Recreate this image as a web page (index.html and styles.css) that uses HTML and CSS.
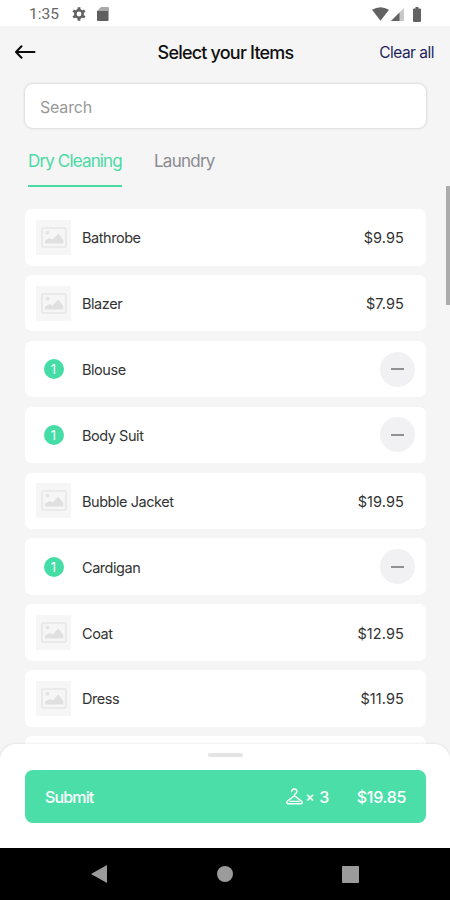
FILE: index.html
```html
<!DOCTYPE html>
<html lang="en">

<head>
    <meta charset="UTF-8" />
    <meta name="viewport" content="width=device-width, initial-scale=1.0" />
    <title>Select your Items</title>
    <link rel="stylesheet" href="styles.css">
</head>

<body>
    <!-- Shared icons -->
    <svg width="0" height="0" class="sprite">
        <symbol id="picture" viewBox="0 0 26 21">
            <rect x="1" y="1" width="24" height="19" rx="1.5" fill="none" stroke="#e6e6e7" stroke-width="1.6" />
            <circle cx="6.5" cy="5.8" r="2" fill="#e4e4e5" />
            <path d="M4 16.5v-2.8l4.5-2.7 3.2 1.6L17.3 6.5l5 6.5v3.5z" fill="#e0e0e1" />
        </symbol>
    </svg>

    <div class="app">
        <div class="status-bar">
            <span class="time">1:35</span>
            <svg class="gear" width="14" height="14" viewBox="0 0 14 14">
                <circle cx="7" cy="7" r="3.7" fill="none" stroke="#626262" stroke-width="2.5" />
                <path d="M7 .3v3M7 10.7v3M1.2 3.65l2.6 1.5M10.2 8.85l2.6 1.5M1.2 10.35l2.6-1.5M10.2 5.15l2.6-1.5" stroke="#626262" stroke-width="2.8" />
            </svg>
            <svg class="sd-card" width="12" height="14" viewBox="0 0 12 14">
                <path d="M4 0h6.8Q12 0 12 1.2v11.6Q12 14 10.8 14H1.2Q0 14 0 12.8V4z" fill="#a8a8a8" />
                <path d="M0 4h11v10H1.2Q0 14 0 12.8z" fill="#5f5f5f" />
            </svg>
            <svg class="wifi" width="17" height="14" viewBox="0 0 17 14">
                <path d="M0 2.8Q8.5-2.4 17 2.8L8.5 13.8z" fill="#626262" />
            </svg>
            <svg class="signal" width="13" height="13" viewBox="0 0 13 13">
                <path d="M13 0v13H0z" fill="#c9c9c9" />
                <path d="M8.5 4.5V13H0z" fill="#626262" />
            </svg>
            <svg class="battery" width="8" height="15" viewBox="0 0 8 15">
                <path d="M2.5 0h3v1.5H7q1 0 1 1V14q0 1-1 1H1q-1 0-1-1V2.5q0-1 1-1h1.5z" fill="#626262" />
            </svg>
        </div>

        <div class="header">
            <svg class="back" width="22" height="14" viewBox="0 0 22 14">
                <path d="M6.5 1.2L1 7l5.5 5.8M1 7h18.5" fill="none" stroke="#0c0c0c" stroke-width="2" stroke-linecap="round" stroke-linejoin="round" />
            </svg>
            <h1>Select your Items</h1>
            <span class="clear">Clear all</span>
        </div>

        <div class="search">Search</div>

        <div class="tabs">
            <div class="tab active">Dry Cleaning</div>
            <div class="tab">Laundry</div>
        </div>

        <div class="list">
            <div class="item">
                <div class="thumb"><svg width="26" height="21"><use href="#picture" /></svg></div>
                <span class="name">Bathrobe</span><span class="price">$9.95</span>
            </div>
            <div class="item">
                <div class="thumb"><svg width="26" height="21"><use href="#picture" /></svg></div>
                <span class="name">Blazer</span><span class="price">$7.95</span>
            </div>
            <div class="item">
                <div class="count"><span>1</span></div>
                <span class="name">Blouse</span><div class="minus"></div>
            </div>
            <div class="item">
                <div class="count"><span>1</span></div>
                <span class="name">Body Suit</span><div class="minus"></div>
            </div>
            <div class="item">
                <div class="thumb"><svg width="26" height="21"><use href="#picture" /></svg></div>
                <span class="name">Bubble Jacket</span><span class="price">$19.95</span>
            </div>
            <div class="item">
                <div class="count"><span>1</span></div>
                <span class="name">Cardigan</span><div class="minus"></div>
            </div>
            <div class="item">
                <div class="thumb"><svg width="26" height="21"><use href="#picture" /></svg></div>
                <span class="name">Coat</span><span class="price">$12.95</span>
            </div>
            <div class="item">
                <div class="thumb"><svg width="26" height="21"><use href="#picture" /></svg></div>
                <span class="name">Dress</span><span class="price">$11.95</span>
            </div>
            <div class="item"></div>
        </div>

        <div class="scrollbar"></div>

        <div class="sheet">
            <div class="handle"></div>
            <div class="submit">
                <span class="label">Submit</span>
                <svg class="hanger" width="17" height="17" viewBox="0 0 17 17">
                    <path d="M5.6 3.6Q5.6 1 8.2 1t2.7 2.4Q10.9 5 9.2 5.8q-.8.5-.8 2L1.6 13q-1.2 1.1-.8 1.9.4.8 1.6.8h12.2q1.2 0 1.5-.8.4-.8-.7-1.8L8.4 7.8M4 13.4h9" fill="none" stroke="#fff" stroke-width="1.4" stroke-linecap="round" stroke-linejoin="round" />
                </svg>
                <span class="times">×</span>
                <span class="qty">3</span>
                <span class="total">$19.85</span>
            </div>
        </div>

        <div class="nav-bar">
            <svg width="16" height="18" viewBox="0 0 16 18"><path d="M16 0v18L0 9z" fill="#9b9b9b" /></svg>
            <svg width="16" height="16" viewBox="0 0 16 16"><circle cx="8" cy="8" r="8" fill="#9b9b9b" /></svg>
            <svg width="17" height="17" viewBox="0 0 17 17"><rect width="17" height="17" rx="1" fill="#9b9b9b" /></svg>
        </div>
    </div>
</body>

</html>
```
FILE: styles.css
```css
* {
    box-sizing: border-box;
}

body {
    margin: 0;
    font-family: Inter, "Liberation Sans", sans-serif;
    background-color: #f5f5f5;
}

.sprite {
    position: absolute;
}

.app {
    position: relative;
    width: 450px;
    height: 900px;
    overflow: hidden;
}

.status-bar {
    display: flex;
    align-items: center;
    height: 26px;
    padding: 2px 29px 0 29px;
    background-color: #fff;
}

.time {
    width: 43px;
    font-family: Roboto, sans-serif;
    font-size: 15.5px;
    color: #666;
}

.sd-card {
    margin-left: 11px;
}

.wifi {
    margin-left: auto;
}

.signal {
    margin-left: 2px;
}

.battery {
    margin-left: 9px;
}

.header {
    display: grid;
    grid-template-columns: 100px 1fr 100px;
    align-items: center;
    height: 52px;
    padding: 0 16px 0 15px;
}

h1 {
    margin: 0;
    padding-left: 2px;
    text-align: center;
    font-size: 18px;
    font-weight: 500;
    letter-spacing: -0.8px;
    color: #111;
}

.clear {
    text-align: right;
    font-size: 15.5px;
    letter-spacing: -0.5px;
    color: #1d1f5c;
}

.search {
    height: 44px;
    margin: 6px 24px 0 25px;
    padding-left: 15px;
    border-radius: 8px;
    background-color: #fff;
    box-shadow: 0 0 3px rgba(0, 0, 0, 0.22);
    font-size: 16px;
    line-height: 46px;
    letter-spacing: -0.2px;
    color: #999;
}

.tabs {
    display: flex;
    gap: 32px;
    height: 59px;
    margin: 0 28px;
}

.tab {
    height: 100%;
    padding-top: 23px;
    font-size: 17px;
    line-height: 21px;
    letter-spacing: -0.75px;
    color: #8b8b90;
}

.tab.active {
    width: 94px;
    white-space: nowrap;
    letter-spacing: -0.85px;
    color: #4adba5;
    border-bottom: 2px solid #4adba5;
}

.list {
    display: flex;
    flex-direction: column;
    gap: 9.4px;
    margin: 22px 24px 0 25px;
}

.item {
    display: flex;
    align-items: center;
    flex-shrink: 0;
    height: 56.5px;
    padding: 0 11px;
    border-radius: 7px;
    background-color: #fff;
}

.thumb,
.count {
    display: flex;
    align-items: center;
    justify-content: center;
    width: 35px;
    height: 35px;
    margin-right: 11px;
}

.thumb {
    background-color: #f6f6f6;
}

.count span {
    width: 20px;
    height: 20px;
    border-radius: 50%;
    background-color: #45dca6;
    text-align: center;
    font-size: 13px;
    line-height: 20px;
    color: #fff;
}

.name,
.price {
    padding-top: 1px;
    font-size: 14.5px;
    letter-spacing: -0.45px;
    color: #333;
}

.price {
    margin-left: auto;
    margin-right: 11px;
    letter-spacing: 0.1px;
}

.minus {
    display: flex;
    align-items: center;
    justify-content: center;
    width: 35px;
    height: 35px;
    margin-left: auto;
    border-radius: 50%;
    background-color: #f1f1f3;
}

.minus::before {
    content: "";
    width: 13px;
    height: 2px;
    background-color: #909096;
}

.scrollbar {
    position: absolute;
    top: 186px;
    right: 0;
    width: 4px;
    height: 119px;
    background-color: #acacac;
}

/* Bottom sheet covers the end of the list */
.sheet {
    position: absolute;
    left: 0;
    right: 0;
    bottom: 52px;
    height: 104px;
    padding: 9px 24px 0 25px;
    border-radius: 16px 16px 0 0;
    background-color: #fff;
    box-shadow: 0 0 3px rgba(0, 0, 0, 0.12);
}

.handle {
    width: 35px;
    height: 4px;
    margin: 0 auto;
    border-radius: 2px;
    background-color: #e4e4e5;
}

.submit {
    display: flex;
    align-items: center;
    height: 53px;
    margin-top: 13px;
    padding: 0 20px;
    border-radius: 8px;
    background-color: #4cdea8;
    font-size: 16px;
    font-weight: 500;
    letter-spacing: -0.5px;
    color: #fff;
}

.label {
    letter-spacing: -0.85px;
}

.hanger {
    margin-left: auto;
}

.times {
    margin-left: 2px;
    font-size: 14px;
}

.qty {
    margin-left: 5px;
}

.total {
    margin-left: 28px;
    letter-spacing: -0.3px;
}

.nav-bar {
    position: absolute;
    left: 0;
    right: 0;
    bottom: 0;
    display: flex;
    align-items: center;
    justify-content: space-between;
    height: 52px;
    padding: 0 91px;
    background-color: #000;
}
```
